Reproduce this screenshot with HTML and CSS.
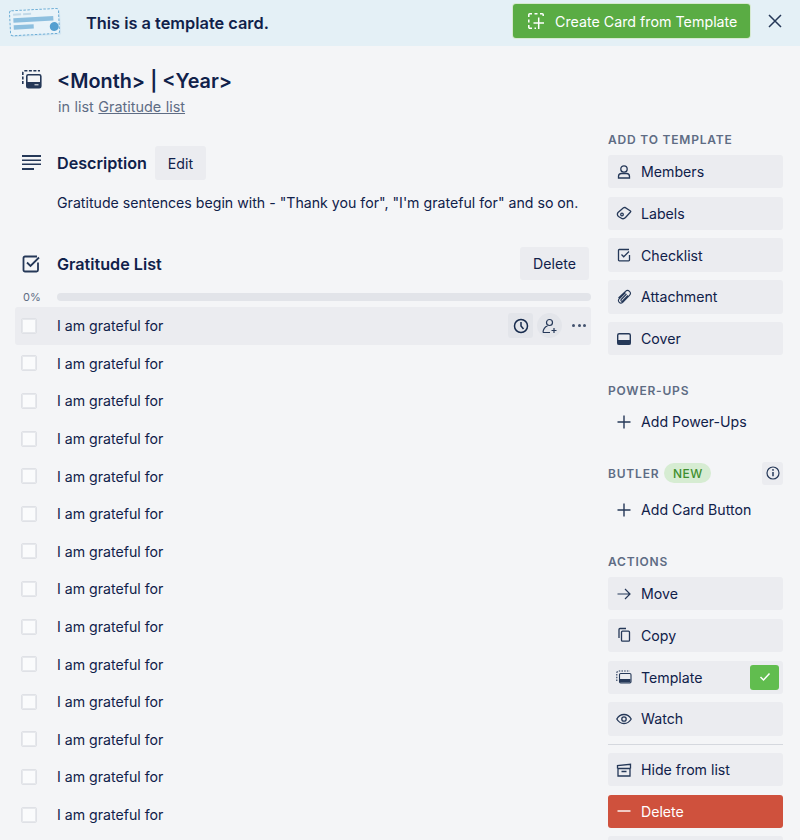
FILE: index.html
```html
<!DOCTYPE html>
<html lang="en">
<head>
    <meta charset="UTF-8">
    <meta name="viewport" content="width=device-width, initial-scale=1.0">
    <title>Template card</title>
    <link rel="stylesheet" href="styles.css">
</head>
<body>

<header class="banner">
    <svg class="banner-art" width="54" height="30" viewBox="0 0 54 30">
        <g transform="rotate(-3 27 15)">
            <rect x="2.500" y="4" width="49" height="25" rx="2" fill="#d3e6f2"/>
            <rect x="1" y="2.500" width="49" height="25" rx="2" fill="#e9f3f9" stroke="#6eaed6" stroke-width="1" stroke-dasharray="2.500 1.500"/>
            <rect x="4.500" y="5.500" width="8" height="2" fill="#c2d9e8"/>
            <rect x="14.500" y="5.500" width="8" height="2" fill="#c2d9e8"/>
            <rect x="4.500" y="10" width="40" height="4.500" fill="#8dbfdf"/>
            <rect x="4.500" y="17" width="20" height="4.500" fill="#8dbfdf"/>
            <circle cx="45" cy="20.500" r="4.500" fill="#559fd0"/>
        </g>
    </svg>
    <span class="banner-text">This is a template card.</span>
    <button class="btn-create">
        <svg width="16" height="16" viewBox="0 0 16 16" fill="none" stroke="#fff" stroke-width="1.500">
            <path d="M.8 4V1.800a1 1 0 0 1 1-1H4M6.500 .8h3M12 .8h2.200a1 1 0 0 1 1 1V3M.8 6.500v3M.8 12v2.200a1 1 0 0 0 1 1H4M6.500 15.200h1.500"/>
            <path d="M10.700 4.500V16M5.500 10h10.500"/>
        </svg>
        Create Card from Template
    </button>
    <svg class="banner-close" width="14" height="14" viewBox="0 0 14 14" fill="none" stroke="#253858" stroke-width="1.500">
        <path d="M1 1l12 12M13 1L1 13"/>
    </svg>
</header>

<div class="card">
    <main class="main">
        <div class="head title-head">
            <span class="head-icon">
                <svg width="20" height="19" viewBox="0 0 20 19" fill="none" stroke="#253858" stroke-width="1.600">
                    <path d="M.8 14V3a2.200 2.200 0 0 1 2.200-2.200h15" stroke-dasharray="3 1.500"/>
                    <rect x="4.800" y="4.800" width="14" height="13" rx="1.500"/>
                    <rect x="5" y="12" width="13.500" height="5.500" fill="#253858" stroke="none"/>
                    <path d="M12.500 14.800h4" stroke="#f4f5f7" stroke-width="1"/>
                </svg>
            </span>
            <h1>&lt;Month&gt; | &lt;Year&gt;</h1>
        </div>
        <p class="in-list">in list <a href="#">Gratitude list</a></p>

        <div class="head desc-head">
            <span class="head-icon">
                <svg width="20" height="16" viewBox="0 0 20 16" fill="#253858">
                    <rect x="0" y="0" width="19" height="2"/>
                    <rect x="0" y="4.500" width="19" height="1.500"/>
                    <rect x="0" y="8.500" width="19" height="1.500"/>
                    <rect x="0" y="13" width="12" height="2"/>
                </svg>
            </span>
            <h2>Description</h2>
            <button class="btn btn-edit">Edit</button>
        </div>
        <p class="desc">Gratitude sentences begin with - "Thank you for", "I'm grateful for" and so on.</p>

        <div class="head list-head">
            <span class="head-icon">
                <svg width="18" height="18" viewBox="0 0 18 18" fill="none" stroke="#253858" stroke-width="1.800">
                    <path d="M16 7.500V15a1.500 1.500 0 0 1-1.500 1.500H3A1.500 1.500 0 0 1 1.500 15V3A1.500 1.500 0 0 1 3 1.500h12"/>
                    <path d="M5 7.500l3.500 3.500L17 2.500"/>
                </svg>
            </span>
            <h2>Gratitude List</h2>
            <button class="btn btn-delete-list">Delete</button>
        </div>

        <div class="progress">
            <span class="progress-pct">0%</span>
            <div class="progress-bar"></div>
        </div>

        <div class="item item-hover">
            <span class="check"></span>
            <span class="item-text">I am grateful for</span>
            <span class="item-tools">
                <span class="tool tool-square">
                    <svg width="16" height="16" viewBox="0 0 16 16" fill="none" stroke="#172b4d" stroke-width="1.500">
                        <circle cx="8" cy="8" r="6.500"/>
                        <path d="M8 4v4l2.500 3"/>
                    </svg>
                </span>
                <span class="tool tool-round">
                    <svg width="16" height="16" viewBox="0 0 16 16" fill="none" stroke="#253858" stroke-width="1.200">
                        <circle cx="7.500" cy="4.500" r="3"/>
                        <path d="M1 14.500c0-3 2-6 4.500-6.500M1 14.500h7M12 10v5M9.500 12.500h5"/>
                    </svg>
                </span>
                <span class="tool-dots"><i></i><i></i><i></i></span>
            </span>
        </div>
        <div class="item"><span class="check"></span><span class="item-text">I am grateful for</span></div>
        <div class="item"><span class="check"></span><span class="item-text">I am grateful for</span></div>
        <div class="item"><span class="check"></span><span class="item-text">I am grateful for</span></div>
        <div class="item"><span class="check"></span><span class="item-text">I am grateful for</span></div>
        <div class="item"><span class="check"></span><span class="item-text">I am grateful for</span></div>
        <div class="item"><span class="check"></span><span class="item-text">I am grateful for</span></div>
        <div class="item"><span class="check"></span><span class="item-text">I am grateful for</span></div>
        <div class="item"><span class="check"></span><span class="item-text">I am grateful for</span></div>
        <div class="item"><span class="check"></span><span class="item-text">I am grateful for</span></div>
        <div class="item"><span class="check"></span><span class="item-text">I am grateful for</span></div>
        <div class="item"><span class="check"></span><span class="item-text">I am grateful for</span></div>
        <div class="item"><span class="check"></span><span class="item-text">I am grateful for</span></div>
        <div class="item"><span class="check"></span><span class="item-text">I am grateful for</span></div>
    </main>

    <aside class="side">
        <h3 class="side-title side-title-first">ADD TO TEMPLATE</h3>
        <a class="side-btn">
            <svg width="16" height="16" viewBox="0 0 16 16" fill="none" stroke="#253858" stroke-width="1.300"><circle cx="8" cy="5" r="3.200"/><path d="M2.500 14v-1.500a3 3 0 0 1 3-3h5a3 3 0 0 1 3 3V14z"/></svg>
            Members
        </a>
        <a class="side-btn">
            <svg width="16" height="16" viewBox="0 0 16 16" fill="none" stroke="#253858" stroke-width="1.300"><path d="M2 7.500L7.500 2.800a2 2 0 0 1 1.500-.4l5.500 3.600a.6.600 0 0 1 0 1l-5 5.500a3.500 3.500 0 0 1-4.500 .5L2.500 11.500a2.800 2.800 0 0 1-.5-4z"/><circle cx="6" cy="9.500" r="1.300"/></svg>
            Labels
        </a>
        <a class="side-btn">
            <svg width="16" height="16" viewBox="0 0 16 16" fill="none" stroke="#253858" stroke-width="1.300"><path d="M13.500 8v5a.8.800 0 0 1-.8.8H3.300a.8.800 0 0 1-.8-.8V3.300a.8.800 0 0 1 .8-.8h9.700"/><path d="M5.500 7.500l2.200 2.300 5.300-5.300"/></svg>
            Checklist
        </a>
        <a class="side-btn">
            <svg width="16" height="16" viewBox="0 0 16 16" fill="none" stroke="#253858" stroke-width="1.100"><path d="M9.500 3.500L3 10a2.500 2.500 0 0 0 3.500 3.500l7-7.200a2.800 2.800 0 0 0-4-4L2.500 9M10.500 5l-5.300 5.500a1 1 0 0 0 1.400 1.500l5.300-5.500"/></svg>
            Attachment
        </a>
        <a class="side-btn">
            <svg width="16" height="16" viewBox="0 0 16 16" fill="none"><rect x="1.700" y="2.700" width="12.600" height="10.600" rx="1.500" stroke="#253858" stroke-width="1.400"/><rect x="1.500" y="9" width="13" height="4.500" fill="#253858"/></svg>
            Cover
        </a>

        <h3 class="side-title side-title-power">POWER-UPS</h3>
        <a class="side-btn side-btn-plain">
            <svg width="16" height="16" viewBox="0 0 16 16" fill="none" stroke="#253858" stroke-width="1.400"><path d="M8 1.500v13M1.500 8h13"/></svg>
            Add Power-Ups
        </a>

        <div class="butler">
            <h3 class="side-title butler-title">BUTLER</h3>
            <span class="badge-new">NEW</span>
            <span class="info-btn">
                <svg width="14" height="14" viewBox="0 0 14 14" fill="none" stroke="#253858" stroke-width="1.200"><circle cx="7" cy="7" r="6"/><path d="M7 6v4.200" stroke-width="1.500"/><circle cx="7" cy="3.900" r=".9" fill="#253858" stroke="none"/></svg>
            </span>
        </div>
        <a class="side-btn side-btn-plain">
            <svg width="16" height="16" viewBox="0 0 16 16" fill="none" stroke="#253858" stroke-width="1.400"><path d="M8 1.500v13M1.500 8h13"/></svg>
            Add Card Button
        </a>

        <h3 class="side-title side-title-actions">ACTIONS</h3>
        <a class="side-btn">
            <svg width="16" height="16" viewBox="0 0 16 16" fill="none" stroke="#253858" stroke-width="1.200"><path d="M1.500 8h12.500M9 3l5 5-5 5"/></svg>
            Move
        </a>
        <a class="side-btn">
            <svg width="16" height="16" viewBox="0 0 16 16" fill="none" stroke="#253858" stroke-width="1.300"><rect x="5.500" y="4.200" width="8" height="10" rx="1"/><path d="M3 11V2.500a1 1 0 0 1 1-1h6"/></svg>
            Copy
        </a>
        <a class="side-btn">
            <svg width="16" height="16" viewBox="0 0 16 16" fill="none" stroke="#253858" stroke-width="1.100">
                <path d="M.8 12V4a2 2 0 0 1 2-2h11" stroke-dasharray="1.500 1.200"/>
                <rect x="3.500" y="4.500" width="11.500" height="9.500" rx="1.200"/>
                <rect x="4" y="10" width="10.500" height="3.500" fill="#253858" stroke="none"/>
            </svg>
            Template
            <span class="check-pill">
                <svg width="12" height="10" viewBox="0 0 12 10" fill="none" stroke="#fff" stroke-width="1.500"><path d="M1.500 5l3 3 6-6.500"/></svg>
            </span>
        </a>
        <a class="side-btn">
            <svg width="16" height="16" viewBox="0 0 16 16" fill="none" stroke="#253858" stroke-width="1.300"><path d="M.8 8C2.500 5 5 3.500 8 3.500S13.500 5 15.200 8C13.500 11 11 12.500 8 12.500S2.500 11 .8 8z"/><circle cx="8" cy="8" r="2.200"/></svg>
            Watch
        </a>
        <hr class="side-rule">
        <a class="side-btn">
            <svg width="16" height="16" viewBox="0 0 16 16" fill="none" stroke="#253858" stroke-width="1.300"><path d="M2 6.500h12v7.500H2zM1.500 6.500V3.500l13-1.200v4.200M5.500 9.500h5"/></svg>
            Hide from list
        </a>
        <a class="side-btn side-btn-danger">
            <svg width="16" height="16" viewBox="0 0 16 16" fill="none" stroke="#fff" stroke-width="1.400"><path d="M1.500 8h13"/></svg>
            Delete
        </a>
        <a class="side-btn"></a>
    </aside>
</div>

</body>
</html>
```

FILE: styles.css
```css
html, body {
    height: 840px;
    overflow: hidden;
}

body {
    font-family: Inter, "Liberation Sans", sans-serif;
    font-size: 14.15px;
    margin: 0;
    padding: 0;
    background-color: #f4f5f7;
    color: #10214a;
}

h1, h2, h3, p {
    margin: 0;
}

button {
    font-family: inherit;
    border: none;
    cursor: pointer;
}

/* top banner */
.banner {
    height: 46px;
    display: flex;
    align-items: center;
    background-color: #e4f0f6;
    padding: 0 18px 0 9px;
}

.banner-art {
    flex: none;
    margin-top: -2px;
}

.banner-text {
    margin-left: 23px;
    font-size: 16.35px;
    font-weight: 600;
    flex: 1;
}

.btn-create {
    width: 237px;
    height: 34px;
    margin-top: -4px;
    display: flex;
    align-items: center;
    gap: 11px;
    padding: 0 0 0 15px;
    background-color: #5aac44;
    color: #fff;
    font-size: 14.25px;
    border-radius: 3px;
    box-shadow: 0 0 0 1px #d6e9d0;
}

.banner-close {
    margin-left: 18px;
    margin-top: -4px;
}

/* left column */
.card {
    display: flex;
    padding-left: 15px;
}

.main {
    width: 576px;
    flex: none;
}

.head {
    display: flex;
    align-items: center;
    padding-left: 7px;
}

.head-icon {
    width: 35px;
    flex: none;
    display: flex;
}

.title-head {
    margin-top: 21px;
    height: 28px;
}

.title-head .head-icon {
    margin-top: -4px;
}

h1 {
    font-size: 19.8px;
    font-weight: 600;
    line-height: 28px;
}

h2 {
    font-size: 16.15px;
    font-weight: 600;
}

.in-list {
    margin: 2px 0 0 43px;
    line-height: 20px;
    color: #5e6c84;
    font-size: 14.4px;
    word-spacing: 0.5px;
}

.in-list a {
    color: #5e6c84;
}

.desc-head {
    margin-top: 29px;
    height: 34px;
}

.btn {
    background-color: #ebecf0;
    color: #10214a;
    font-size: 14.15px;
    border-radius: 3px;
}

.btn-edit {
    width: 51px;
    height: 34px;
    margin-left: 8px;
}

.desc {
    margin: 13px 0 0 42px;
    line-height: 20px;
    font-size: 14.16px;
}

.list-head {
    margin-top: 34px;
    height: 33px;
}

.btn-delete-list {
    width: 69px;
    height: 33px;
    margin-left: auto;
    margin-right: 2px;
}

.progress {
    display: flex;
    align-items: center;
    height: 16px;
    margin: 9px 0 2px;
}

.progress-pct {
    width: 42px;
    padding-left: 8px;
    box-sizing: border-box;
    font-size: 11px;
    color: #5e6c84;
}

.progress-bar {
    flex: 1;
    height: 8px;
    background-color: #e2e4e9;
    border-radius: 4px;
}

.item {
    height: 37.6px;
    display: flex;
    align-items: center;
    padding-left: 6px;
    border-radius: 3px;
}

.item-hover {
    background-color: #ebecf0;
}

.check {
    width: 16px;
    height: 16px;
    flex: none;
    box-sizing: border-box;
    background-color: #fafbfc;
    border: 1px solid #dfe1e6;
    box-shadow: inset 0 0 0 1px #e6e8ec;
    border-radius: 2px;
}

.item-text {
    margin-left: 20px;
}

.item-tools {
    margin-left: auto;
    display: flex;
    align-items: center;
    gap: 4px;
    padding-right: 5px;
}

.tool {
    width: 25px;
    height: 25px;
    display: flex;
    align-items: center;
    justify-content: center;
    background-color: #e3e5ea;
}

.tool-square {
    border-radius: 3px;
}

.tool-round {
    border-radius: 50%;
}

.tool-dots {
    width: 14px;
    margin-left: 6px;
    display: flex;
    justify-content: space-between;
}

.tool-dots i {
    width: 3px;
    height: 3px;
    border-radius: 50%;
    background-color: #42526e;
}

/* sidebar */
.side {
    width: 175px;
    flex: none;
    margin-left: 17px;
}

.side-title {
    font-size: 12px;
    font-weight: 600;
    line-height: 16px;
    letter-spacing: 0.8px;
    color: #5e6c84;
}

.side-title-first {
    margin: 86px 0 7px;
}

.side-title-power {
    margin: 27.35px 0 6.3px;
}

.side-title-actions {
    margin: 27.65px 0 7px;
}

.butler-title {
    padding-top: 2px;
}

.side-btn {
    height: 33.4px;
    margin-bottom: 8.35px;
    display: flex;
    align-items: center;
    gap: 9px;
    padding-left: 8px;
    background-color: #ebecf0;
    border-radius: 3px;
    color: #10214a;
}

.side-btn svg {
    flex: none;
}

.side-btn-plain {
    background-color: transparent;
}

.side-btn-danger {
    background-color: #cf513d;
    color: #fff;
}

.butler {
    height: 23px;
    margin: 23.35px 0 8.3px;
    display: flex;
    align-items: center;
}

.badge-new {
    margin-left: 5px;
    width: 47px;
    height: 20px;
    display: flex;
    align-items: center;
    justify-content: center;
    background-color: #d6ecd2;
    color: #3f8f2f;
    font-size: 12px;
    font-weight: 500;
    letter-spacing: 0.4px;
    border-radius: 10px;
}

.info-btn {
    margin-left: auto;
    width: 21px;
    height: 23px;
    display: flex;
    align-items: center;
    justify-content: center;
    background-color: #ebecf0;
    border-radius: 3px;
}

.check-pill {
    margin-left: auto;
    margin-right: 4px;
    width: 29px;
    height: 25px;
    display: flex;
    align-items: center;
    justify-content: center;
    background-color: #61bd4f;
    border-radius: 3px;
}

.side-rule {
    height: 1px;
    margin: 0 0 8px;
    border: none;
    background-color: #d5d8de;
}
```
